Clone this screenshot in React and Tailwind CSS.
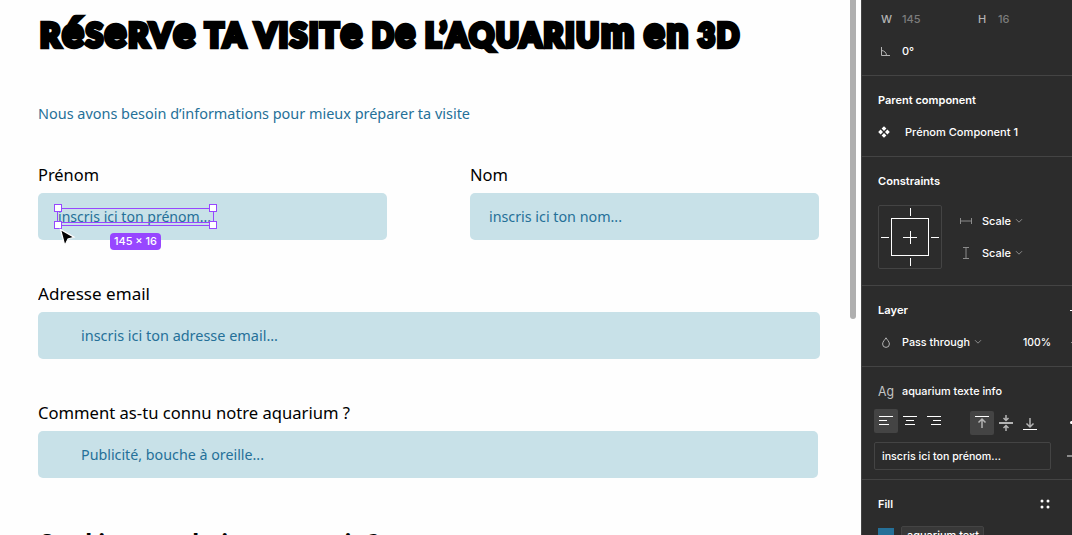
import { useLayoutEffect, useRef } from 'react';

/* Single line of text stretched horizontally to an exact width. */
function Fit({ w, className = '', children }) {
  const ref = useRef(null);
  useLayoutEffect(() => {
    const el = ref.current;
    el.style.transform = 'none';
    const natural = el.getBoundingClientRect().width;
    el.style.transform = `scaleX(${w / natural})`;
  }, [w]);
  return (
    <span className="block shrink-0" style={{ width: w }}>
      <span ref={ref} className={`inline-block origin-left whitespace-nowrap ${className}`}>{children}</span>
    </span>
  );
}

/* Display lettering: capitals mixed with cap-height e, n and m. */
function Word({ w, text }) {
  return (
    <Fit w={w} className="tracking-[2px] [-webkit-text-stroke:4.4px_black] [stroke-linejoin:round]">
      {text.split(/([eénm]+)/).map((part, i) =>
        /[eénm]/.test(part) ? (
          <span key={i} className="text-[41px] leading-0">{part}</span>
        ) : (
          <span key={i} className="leading-0 uppercase">{part}</span>
        )
      )}
    </Fit>
  );
}

function Field({ label, lw, text, tw, width, pad }) {
  return (
    <div className={width}>
      <div className="flex h-[26px] text-[17px] leading-[15px] text-black">
        <Fit w={lw}>{label}</Fit>
      </div>
      <div className={`flex h-[47px] items-center rounded-[5px] bg-[#c8e1e8] pb-px text-[15px] leading-5 text-[#257098] ${pad}`}>
        <Fit w={tw}>{text}</Fit>
      </div>
    </div>
  );
}

const Handle = ({ className }) => (
  <span className={`absolute size-2 border border-[#9747ff] bg-white ${className}`} />
);

const Chevron = () => (
  <svg className="ml-1 h-1.5 w-2 shrink-0" viewBox="0 0 8 6" fill="none" stroke="#8b8b8b"><path d="M1 1.2 4 4.2 7 1.2" /></svg>
);

const HAlign = ({ lines }) => (
  <svg className="size-6" viewBox="0 0 24 24" stroke="white" fill="none"><path d={lines} /></svg>
);

export default function App() {
  return (
    <div className="flex h-[535px] w-[1072px] overflow-hidden bg-[#fefefe]">
      <main className="relative h-[535px] w-[861px] shrink-0 overflow-hidden font-['Noto_Sans',sans-serif]">
        <div className="flex h-[535px] flex-col overflow-hidden pl-[38px]">
          <h1 className="flex h-[72px] shrink-0 gap-2 pt-[5px] pl-0.5 font-['Lato',sans-serif] text-[32px] leading-[60px] font-black text-black">
            <Word w={157} text="Réserve" />
            <Word w={42} text="ta" />
            <Word w={109} text="visite" />
            <Word w={45} text="de" />
            <Word w={211} text="l’aquarium" />
            <Word w={46} text="en" />
            <Word w={43} text="3D" />
          </h1>
          <p className="mt-[30px] flex h-[61px] shrink-0 text-[15px] leading-[22px] text-[#257098]">
            <Fit w={432}>Nous avons besoin d’informations pour mieux préparer ta visite</Fit>
          </p>
          <div className="mt-1 flex shrink-0 gap-[83px]">
            <Field label="Prénom" lw={61} text="inscris ici ton prénom..." tw={153} width="w-[349px]" pad="pl-5" />
            <Field label="Nom" lw={38} text="inscris ici ton nom..." tw={133} width="w-[349px]" pad="pl-[19px]" />
          </div>
          <div className="mt-[46px] shrink-0">
            <Field label="Adresse email" lw={112} text="inscris ici ton adresse email..." tw={197} width="w-[782px]" pad="pl-[43px]" />
          </div>
          <div className="mt-[46px] shrink-0">
            <Field label="Comment as-tu connu notre aquarium ?" lw={312} text="Publicité, bouche à oreille..." tw={183} width="w-[780px]" pad="pl-[43px]" />
          </div>
          <h2 className="mt-[46px] flex h-10 shrink-0 text-[25px] leading-9 font-bold text-black">
            <Fit w={341}>Quel jour souhaites-tu venir ?</Fit>
          </h2>
        </div>

        <div className="absolute top-[208px] left-[57px] h-[18px] w-[157px] border border-[#9747ff]">
          <span className="absolute bottom-[2px] left-0 h-px w-full bg-[#9747ff]" />
          <Handle className="-top-[5px] -left-1" />
          <Handle className="-top-[5px] -right-1" />
          <Handle className="-bottom-1 -left-1" />
          <Handle className="-right-1 -bottom-1" />
        </div>
        <div className="absolute top-[233px] left-[110px] flex h-[17px] w-[51px] items-center justify-center rounded-sm bg-[#9747ff] font-['Inter',sans-serif] text-[11px] font-medium text-white">
          <Fit w={43}>145 × 16</Fit>
        </div>
        <svg className="absolute top-[228px] left-[59px] h-[20px] w-[17px]" viewBox="0 0 17 20">
          <path d="M1.5 1.5 15 9.2 9 11 5.8 17.5Z" fill="#000" stroke="#fff" strokeWidth="1.2" />
        </svg>
        <div className="absolute top-0 left-[850px] h-[319px] w-1.5 rounded-b-full bg-[#afafaf]" />
      </main>

      <aside className="flex h-[535px] w-[211px] shrink-0 flex-col overflow-hidden border-l border-[#444] bg-[#2c2c2c] font-['Inter',sans-serif] text-[11px] leading-4 font-medium text-white">
        <section className="h-[76px] shrink-0 border-b border-[#444] pt-[11px]">
          <div className="flex h-4 pl-[19px] text-[#7c7c7c]">
            <span className="w-[21px] text-[#b3b3b3]">W</span>
            <span className="w-[76px]">145</span>
            <span className="w-5 text-[#b3b3b3]">H</span>
            <span>16</span>
          </div>
          <div className="mt-4 flex h-4 items-center pl-[19px]">
            <svg className="mr-3 size-[9px]" viewBox="0 0 9 9" fill="none" stroke="#b3b3b3"><path d="M.5 0V8.5H9M.5 3.5C3 3.5 5.5 5.5 5.5 8.5" /></svg>
            <span>0°</span>
          </div>
        </section>

        <section className="h-[81px] shrink-0 border-b border-[#444] pt-4">
          <div className="pl-4 font-semibold"><Fit w={98}>Parent component</Fit></div>
          <div className="mt-4 flex items-center pl-4">
            <svg className="mr-[15px] size-3" viewBox="0 0 12 12" fill="white"><path d="m6 .2 2.4 2.4L6 5 3.6 2.6ZM6 7l2.4 2.4L6 11.8 3.6 9.4ZM2.6 3.6 5 6 2.6 8.4.2 6ZM9.4 3.6 11.8 6 9.4 8.4 7 6Z" /></svg>
            <Fit w={113}>Prénom Component 1</Fit>
          </div>
        </section>

        <section className="h-[129px] shrink-0 border-b border-[#444] pt-4">
          <div className="pl-4 font-semibold"><Fit w={62}>Constraints</Fit></div>
          <div className="mt-4 flex pl-4">
            <svg className="size-16 shrink-0" viewBox="0 0 64 64" fill="none" stroke="white">
              <rect x=".5" y=".5" width="63" height="63" rx="1.5" stroke="#444" />
              <rect x="13.5" y="13.5" width="37" height="37" />
              <path d="M32.5 3V11M32.5 53V61M3 32.5H11M53 32.5H61M32.5 26V39M25 32.5H39" />
            </svg>
            <div className="flex flex-col gap-4 pt-2 pl-[18px]">
              <div className="flex h-4 items-center">
                <svg className="mr-2.5 h-3 w-3" viewBox="0 0 12 12" fill="none" stroke="#8b8b8b"><path d="M.5 3V9M11.5 3V9M1 6H11" /></svg>
                <Fit w={29}>Scale</Fit><Chevron />
              </div>
              <div className="flex h-4 items-center">
                <svg className="mr-2.5 h-3 w-3" viewBox="0 0 12 12" fill="none" stroke="#8b8b8b"><path d="M3 .5H9M3 11.5H9M6 1V11" /></svg>
                <Fit w={29}>Scale</Fit><Chevron />
              </div>
            </div>
          </div>
        </section>

        <section className="h-[81px] shrink-0 border-b border-[#444] pt-4">
          <div className="flex items-center justify-between pl-4 font-semibold">
            <Fit w={30}>Layer</Fit>
            <span className="h-px w-0.5 bg-white" />
          </div>
          <div className="mt-4 flex items-center pl-5">
            <svg className="mr-3 h-[11px] w-2 shrink-0" viewBox="0 0 8 11" fill="none" stroke="#b3b3b3"><path d="M4 .8C3 2.8.6 4.5.6 7A3.4 3.4 0 0 0 7.4 7C7.4 4.5 5 2.8 4 .8Z" /></svg>
            <Fit w={68}>Pass through</Fit><Chevron />
            <span className="ml-auto"><Fit w={28}>100%</Fit></span>
            <span className="ml-[20px] h-px w-px bg-[#8b8b8b]" />
          </div>
        </section>

        <section className="h-[113px] shrink-0 border-b border-[#444] pt-4">
          <div className="flex h-4 items-center pl-4">
            <span className="w-6 text-[13px] font-normal text-[#c4c4c4]"><Fit w={16}>Ag</Fit></span>
            <Fit w={100}>aquarium texte info</Fit>
          </div>
          <div className="mt-2.5 flex h-[26px] pl-3">
            <span className="size-6 rounded-xs bg-[#444]"><HAlign lines="M5 7.5H19M5 11.5H13M5 15.5H15" /></span>
            <span className="size-6"><HAlign lines="M5 7.5H19M8 11.5H16M7 15.5H17" /></span>
            <span className="size-6"><HAlign lines="M5 7.5H19M11 11.5H19M9 15.5H19" /></span>
            <span className="mt-0.5 ml-6 size-6 rounded-xs bg-[#444]">
              <svg className="size-6" viewBox="0 0 24 24" fill="none" stroke="#b3b3b3"><path d="M5 5.5H19" stroke="white" /><path d="M12 17V8M8.5 11.5 12 8 15.5 11.5" strokeWidth="1.5" /></svg>
            </span>
            <svg className="mt-0.5 size-6" viewBox="0 0 24 24" fill="none" stroke="#b3b3b3"><path d="M5 12H19" strokeWidth="2" /><path d="M12 4V9M12 20V15M9.5 7 12 9.5 14.5 7M9.5 17 12 14.5 14.5 17" strokeWidth="1.5" /></svg>
            <svg className="mt-0.5 size-6" viewBox="0 0 24 24" fill="none" stroke="#b3b3b3"><path d="M5 18.5H19" stroke="white" /><path d="M12 7V16M8.5 12.5 12 16 15.5 12.5" strokeWidth="1.5" /></svg>
            <span className="mt-3 ml-auto h-[3px] w-0.5 rounded-l-full bg-white" />
          </div>
          <div className="mt-[7px] flex items-center justify-between pl-3">
            <div className="flex h-7 w-[177px] items-center rounded-xs border border-[#444] pl-[7px]">
              <Fit w={119}>inscris ici ton prénom...</Fit>
            </div>
            <span className="h-0.5 w-[5px] bg-[#8b8b8b]" />
          </div>
        </section>

        <section className="h-[55px] shrink-0 pt-4">
          <div className="flex items-center pl-4 font-semibold">
            <Fit w={15}>Fill</Fit>
            <svg className="ml-[147px] size-[10px]" viewBox="0 0 10 10" fill="white"><circle cx="2" cy="2" r="1.5" /><circle cx="8" cy="2" r="1.5" /><circle cx="2" cy="8" r="1.5" /><circle cx="8" cy="8" r="1.5" /></svg>
          </div>
          <div className="mt-[14px] flex pl-4">
            <span className="mt-0.5 size-4 bg-[#257098]" />
            <div className="ml-[7px] flex h-[22px] w-[83px] items-start rounded-xs border border-[#444] bg-[#383838] pl-[5px]">
              <Fit w={72}>aquarium text</Fit>
            </div>
          </div>
        </section>
      </aside>
    </div>
  );
}
